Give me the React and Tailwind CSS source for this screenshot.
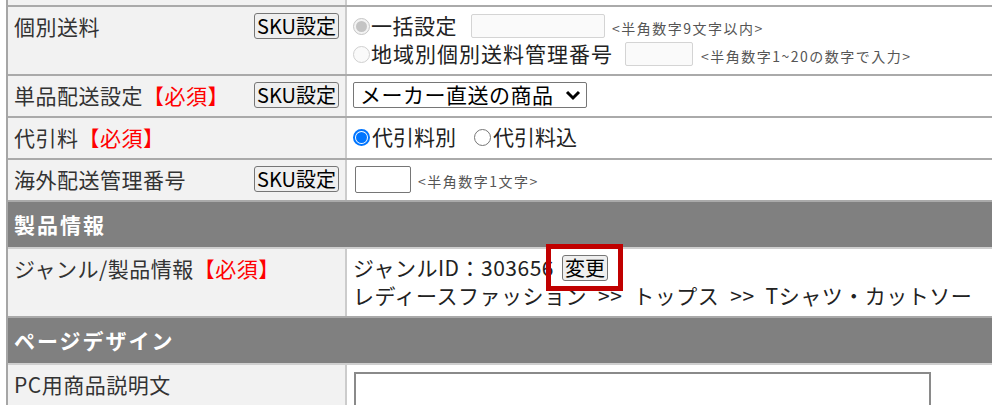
const Radio = ({ state }) => {
  if (state === "checked") {
    return (
      <span className="w-[17px] h-[17px] rounded-full border-2 border-[#0075ff] bg-white p-[1px] flex shrink-0">
        <span className="w-full h-full rounded-full bg-[#0075ff]"></span>
      </span>
    );
  }
  if (state === "disabledChecked") {
    return (
      <span className="w-[17px] h-[17px] rounded-full border border-[#c6c6c6] bg-[#f3f3f3] flex items-center justify-center shrink-0">
        <span className="w-[11px] h-[11px] rounded-full bg-[#c4c4c4]"></span>
      </span>
    );
  }
  if (state === "disabled") {
    return (
      <span className="block w-[17px] h-[17px] rounded-full border border-[#d0d0d0] bg-[#fafafa] shrink-0"></span>
    );
  }
  return (
    <span className="block w-[17px] h-[17px] rounded-full border border-[#767676] bg-white shrink-0"></span>
  );
};

const Button = ({ children }) => {
  return (
    <span className="h-[26px] px-[2px] flex items-center border border-[#767676] rounded-[3px] bg-[#efefef] text-black text-[20px] leading-none tracking-normal">
      {children}
    </span>
  );
};

const Note = ({ children }) => {
  return (
    <span className="text-[14px] tracking-[1.5px] text-[#555]">{children}</span>
  );
};

const Line = ({ children }) => {
  return <div className="h-[28px] flex items-center">{children}</div>;
};

const Sep = () => {
  return <span className="mx-[11px]">&gt;&gt;</span>;
};

const Row = ({ label, required, sku, children, pb = "pb-[7px]" }) => {
  return (
    <div className="flex border-b-2 border-[#aaaaaa]">
      <div
        className={`w-[339px] shrink-0 bg-[#f2f2f2] border-r-2 border-[#cccccc] pl-[6px] pr-[6px] pt-[5px] ${pb} flex justify-between items-start`}
      >
        <span className="leading-[28px] text-[#333]">
          {label}
          {required && <span className="text-[#ff0000]">【必須】</span>}
        </span>
        {sku && (
          <span className="h-[28px] flex items-center">
            <Button>SKU設定</Button>
          </span>
        )}
      </div>
      <div className={`flex-1 pl-[6px] pt-[5px] ${pb} text-[#222]`}>
        {children}
      </div>
    </div>
  );
};

const Header = ({ children }) => {
  return (
    <div className="h-[47px] bg-[#808080] border-b-2 border-[#cfcfcf] flex items-center pl-[6px] text-white font-bold tracking-[2px]">
      {children}
    </div>
  );
};

export default function App() {
  return (
    <div className="w-full h-[405px] overflow-hidden bg-white font-['Noto_Sans_CJK_JP','Noto_Sans',sans-serif] text-[21px] tracking-[0.5px]">
      <div className="ml-[6px] border-l-2 border-[#a6a6a6]">
        <div className="flex h-[7px] border-b-2 border-[#aaaaaa]">
          <div className="w-[339px] bg-[#f2f2f2] border-r-2 border-[#cccccc]"></div>
          <div className="flex-1"></div>
        </div>

        <Row label="個別送料" sku pb="pb-[6px]">
          <Line>
            <Radio state="disabledChecked" />
            <span className="ml-[1px] tracking-[0.5px]">一括設定</span>
            <span className="ml-[14px] w-[134px] h-[24px] border border-[#d4d4d4] rounded-[2px] bg-[#fafafa]"></span>
            <span className="ml-[7px]">
              <Note>&lt;半角数字9文字以内&gt;</Note>
            </span>
          </Line>
          <Line>
            <Radio state="disabled" />
            <span className="ml-[1px] tracking-[1px]">地域別個別送料管理番号</span>
            <span className="ml-[12px] w-[68px] h-[24px] border border-[#d4d4d4] rounded-[2px] bg-[#fafafa]"></span>
            <span className="ml-[8px]">
              <Note>&lt;半角数字1~20の数字で入力&gt;</Note>
            </span>
          </Line>
        </Row>

        <Row label="単品配送設定" required sku>
          <Line>
            <span className="w-[234px] h-[26px] flex items-center justify-between pl-[6px] pr-[5px] border border-[#767676] rounded-[2px] bg-white text-black">
              <span>メーカー直送の商品</span>
              <svg width="16" height="12" viewBox="0 0 16 12">
                <path
                  d="M2 3 L8 9 L14 3"
                  fill="none"
                  stroke="#000"
                  strokeWidth="3"
                />
              </svg>
            </span>
          </Line>
        </Row>

        <Row label="代引料" required>
          <Line>
            <Radio state="checked" />
            <span className="ml-[2px] tracking-[0px]">代引料別</span>
            <span className="ml-[18px]">
              <Radio state="unchecked" />
            </span>
            <span className="ml-[2px] tracking-[0px]">代引料込</span>
          </Line>
        </Row>

        <Row label="海外配送管理番号" sku>
          <Line>
            <span className="ml-[2px] w-[56px] h-[27px] border border-[#767676] rounded-[2px] bg-white"></span>
            <span className="ml-[7px]">
              <Note>&lt;半角数字1文字&gt;</Note>
            </span>
          </Line>
        </Row>

        <Header>製品情報</Header>

        <Row label="ジャンル/製品情報" required pb="pb-[6px]">
          <Line>
            <span>ジャンルID：303656</span>
            <span className="relative ml-[8px]">
              <Button>変更</Button>
              <span className="absolute -left-[16px] -right-[15px] -top-[11px] -bottom-[10px] border-[5px] border-[#c00000]"></span>
            </span>
          </Line>
          <Line>
            <span>
              レディースファッション<Sep />トップス<Sep />Tシャツ・カットソー
            </span>
          </Line>
        </Row>

        <Header>ページデザイン</Header>

        <Row label="PC用商品説明文">
          <div className="ml-[1px] mt-[2px] w-[577px] h-[80px] border-2 border-[#8a8a8a] bg-white"></div>
        </Row>
      </div>
    </div>
  );
}
